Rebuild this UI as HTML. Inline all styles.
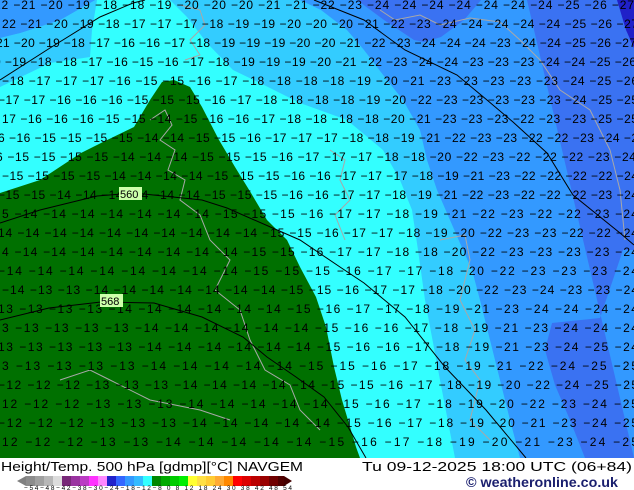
<!DOCTYPE html>
<html><head><meta charset="utf-8"><style>
html,body{margin:0;padding:0;width:634px;height:490px;overflow:hidden;background:#fff}
svg{display:block}
.l{font-family:"Liberation Sans",sans-serif;font-size:12px;fill:#000}
</style></head><body>
<svg width="634" height="490" viewBox="0 0 634 490" xmlns="http://www.w3.org/2000/svg">
<rect x="0" y="0" width="634" height="458" fill="#3399ff"/>
<polygon fill="#3a72f2" points="527,0 634,0 634,250 623,250 600,318 552,323 545,350 555,385 570,420 585,458 634,458"/>
<polygon fill="#3a72f2" points="357,0 481,0 464,20 441,37 424,42 414,40 384,20"/>
<polygon fill="#2020c8" points="617,0 634,0 634,48 626,30"/>
<polygon fill="#33ccff" points="0,37 20,33 60,20 95,0 300,0 321,10 347,30 364,50 387,80 403,100 420,130 427,160 437,190 450,220 463,250 472,270 480,300 495,360 510,420 520,458 0,458"/>
<polygon fill="#3399ff" points="0,0 95,0 60,20 20,33 0,38"/>
<polygon fill="#33ffff" points="97,0 170,0 187,17 207,43 233,70 260,83 300,103 347,120 383,150 400,180 412,210 418,250 425,300 440,380 455,458 0,458 0,87 50,63 90,57 92,30"/>
<polygon fill="#007000" points="0,193 40,180 81,153 101,143 134,127 150,100 162,82 174,80 190,87 202,107 219,140 235,167 251,193 267,220 287,240 300,267 316,297 326,327 334,367 342,400 356,447 360,458 0,458"/>
<g fill="none" stroke="#a8a8a8" stroke-width="1">
<path d="M150,120 L165,110 172,125 160,140 175,150 168,170 185,180 180,200 200,215 210,240 230,260 215,290 240,310 250,340 265,370 290,385 300,410 320,430"/>
<path d="M180,5 L200,10 205,25 190,40 200,55 185,60"/>
<path d="M330,150 L345,160 340,180 350,200 335,215 345,240"/>
<path d="M440,240 L465,235 470,260 460,300 475,330 465,360 480,380 470,420 490,440"/>
<path d="M380,10 L395,20 420,15 440,25 470,18 500,22 520,40 540,60 560,90 590,110 610,150 620,190 625,240"/>
<path d="M60,380 L90,370 110,380 150,400 200,410 230,420"/>
</g>
<g fill="none" stroke="#000" stroke-width="1">
<path d="M0,80 L50,48 100,17 133,3 145,0"/>
<path d="M314,0 L364,20 405,50 457,75 487,100 513,122 547,153 573,195 620,233 634,245"/>
<path d="M0,223 L40,210 97,196 134,193 202,200 227,208 300,240 340,267 364,283 405,317 445,367 486,410 526,458"/>
<path d="M0,320 L49,308 101,302 154,303 202,317 243,337 267,357 296,377 324,397 348,427 366,458"/>
</g>
<g class="l">
<text x="-6" y="9" textLength="640" lengthAdjust="spacing">22 −21 −20 −19 −18 −18 −19 −20 −20 −20 −21 −21 −22 −23 −24 −24 −24 −24 −24 −24 −24 −25 −26 −27</text>
<text x="2" y="28" textLength="636" lengthAdjust="spacing">22 −21 −20 −19 −18 −17 −17 −17 −18 −19 −19 −20 −20 −20 −21 −22 −23 −24 −24 −24 −24 −24 −25 −26 −27</text>
<text x="-4" y="47" textLength="640" lengthAdjust="spacing">21 −20 −19 −18 −17 −16 −16 −17 −18 −19 −19 −19 −20 −20 −21 −22 −23 −24 −24 −24 −23 −24 −24 −25 −26 −27</text>
<text x="-6" y="66" textLength="642" lengthAdjust="spacing">0 −19 −18 −18 −17 −16 −15 −16 −17 −18 −19 −19 −19 −20 −21 −22 −23 −24 −24 −23 −23 −23 −24 −24 −25 −26</text>
<text x="2" y="85" textLength="636" lengthAdjust="spacing">−18 −17 −17 −17 −16 −15 −15 −16 −17 −18 −18 −18 −18 −19 −20 −21 −23 −23 −23 −23 −23 −24 −25 −26</text>
<text x="-2" y="104" textLength="640" lengthAdjust="spacing">−17 −17 −16 −16 −16 −15 −15 −15 −16 −17 −18 −18 −18 −18 −19 −20 −22 −23 −23 −23 −23 −23 −24 −25 −25</text>
<text x="2" y="123" textLength="636" lengthAdjust="spacing">17 −16 −16 −16 −15 −15 −14 −15 −16 −16 −17 −18 −18 −18 −18 −20 −21 −23 −23 −23 −22 −23 −23 −25 −25</text>
<text x="-2" y="142" textLength="640" lengthAdjust="spacing">6 −16 −15 −15 −15 −15 −14 −14 −15 −15 −16 −17 −17 −17 −18 −18 −19 −21 −22 −23 −23 −22 −22 −23 −24 −2</text>
<text x="-4" y="161" textLength="640" lengthAdjust="spacing">6 −15 −15 −15 −15 −14 −14 −14 −15 −15 −15 −16 −17 −17 −17 −18 −18 −20 −22 −23 −22 −22 −22 −23 −24</text>
<text x="2" y="180" textLength="636" lengthAdjust="spacing">−15 −15 −15 −15 −14 −14 −14 −14 −15 −15 −15 −16 −16 −17 −17 −17 −18 −19 −21 −23 −22 −22 −22 −22 −24</text>
<text x="-2" y="199" textLength="640" lengthAdjust="spacing">−15 −15 −14 −14 −14 −14 −14 −14 −15 −15 −15 −16 −16 −17 −17 −18 −19 −21 −22 −23 −22 −22 −22 −23 −24</text>
<text x="2" y="218" textLength="636" lengthAdjust="spacing">5 −14 −14 −14 −14 −14 −14 −14 −15 −15 −15 −16 −17 −17 −18 −19 −21 −22 −23 −22 −22 −23 −24</text>
<text x="-2" y="237" textLength="640" lengthAdjust="spacing">14 −14 −14 −14 −14 −14 −14 −14 −14 −14 −15 −15 −16 −17 −17 −18 −19 −20 −22 −23 −23 −22 −22 −24</text>
<text x="2" y="256" textLength="636" lengthAdjust="spacing">4 −14 −14 −14 −14 −14 −14 −14 −14 −15 −15 −16 −17 −17 −18 −18 −20 −22 −23 −23 −23 −23 −24</text>
<text x="-2" y="275" textLength="640" lengthAdjust="spacing">−14 −14 −14 −14 −14 −14 −14 −14 −15 −15 −15 −16 −17 −17 −18 −20 −22 −23 −23 −23 −24</text>
<text x="2" y="294" textLength="636" lengthAdjust="spacing">−14 −13 −13 −14 −14 −14 −14 −14 −14 −14 −15 −15 −16 −17 −17 −18 −20 −22 −23 −24 −23 −23 −24</text>
<text x="-2" y="313" textLength="640" lengthAdjust="spacing">13 −13 −13 −13 −14 −14 −14 −14 −14 −14 −15 −16 −17 −17 −18 −19 −21 −23 −24 −24 −24 −24</text>
<text x="2" y="332" textLength="636" lengthAdjust="spacing">3 −13 −13 −13 −13 −14 −14 −14 −14 −14 −14 −15 −16 −16 −17 −18 −19 −21 −23 −24 −24 −24</text>
<text x="-2" y="351" textLength="640" lengthAdjust="spacing">13 −13 −13 −13 −13 −14 −14 −14 −14 −14 −14 −15 −16 −16 −17 −18 −19 −21 −23 −24 −25 −24</text>
<text x="2" y="370" textLength="636" lengthAdjust="spacing">3 −13 −13 −13 −13 −14 −14 −14 −14 −14 −15 −15 −16 −17 −18 −19 −21 −22 −24 −25 −25</text>
<text x="-2" y="389" textLength="640" lengthAdjust="spacing">−12 −12 −12 −13 −13 −13 −14 −14 −14 −14 −14 −15 −15 −16 −17 −18 −19 −20 −22 −24 −25 −25</text>
<text x="2" y="408" textLength="636" lengthAdjust="spacing">12 −12 −12 −13 −13 −13 −14 −14 −14 −14 −14 −15 −16 −17 −18 −19 −20 −22 −23 −24 −25</text>
<text x="-2" y="427" textLength="640" lengthAdjust="spacing">−12 −12 −12 −13 −13 −13 −14 −14 −14 −14 −14 −15 −16 −17 −18 −19 −20 −21 −23 −24 −25</text>
<text x="2" y="446" textLength="636" lengthAdjust="spacing">12 −12 −12 −13 −13 −14 −14 −14 −14 −14 −15 −16 −17 −18 −19 −20 −21 −23 −24 −25</text>
</g>
<rect x="119" y="187" width="23" height="13" fill="#ccffaa"/>
<text x="120" y="198" font-family="Liberation Sans" font-size="11" fill="#000">560</text>
<rect x="100" y="294" width="23" height="13" fill="#ccffaa"/>
<text x="101" y="305" font-family="Liberation Sans" font-size="11" fill="#000">568</text>
<rect x="0" y="458" width="634" height="32" fill="#fff"/>
<text x="1" y="471" font-family="Liberation Sans" font-size="12.5" fill="#000" textLength="302" lengthAdjust="spacingAndGlyphs">Height/Temp. 500 hPa [gdmp][°C] NAVGEM</text>
<text x="362" y="471" font-family="Liberation Sans" font-size="12.5" fill="#000" textLength="270" lengthAdjust="spacingAndGlyphs">Tu 09-12-2025 18:00 UTC (06+84)</text>
<text x="466" y="487" font-family="Liberation Sans" font-size="13.5" font-weight="bold" fill="#1a1f6e" textLength="152" lengthAdjust="spacingAndGlyphs">© weatheronline.co.uk</text>
<g>
<polygon points="17,481 26,476 26,486" fill="#808080"/>
<rect x="26" y="476" width="9" height="10" fill="#8c8c8c"/>
<rect x="35" y="476" width="9" height="10" fill="#a0a0a0"/>
<rect x="44" y="476" width="9" height="10" fill="#b8b8b8"/>
<rect x="53" y="476" width="9" height="10" fill="#dcdcdc"/>
<rect x="62" y="476" width="9" height="10" fill="#782878"/>
<rect x="71" y="476" width="9" height="10" fill="#9a33a0"/>
<rect x="80" y="476" width="9" height="10" fill="#bb3cc4"/>
<rect x="89" y="476" width="9" height="10" fill="#ff33ff"/>
<rect x="98" y="476" width="9" height="10" fill="#ff88ff"/>
<rect x="107" y="476" width="9" height="10" fill="#2222cc"/>
<rect x="116" y="476" width="9" height="10" fill="#3366ff"/>
<rect x="125" y="476" width="9" height="10" fill="#3399ff"/>
<rect x="134" y="476" width="9" height="10" fill="#33bbff"/>
<rect x="143" y="476" width="9" height="10" fill="#33ffff"/>
<rect x="152" y="476" width="9" height="10" fill="#008800"/>
<rect x="161" y="476" width="9" height="10" fill="#00aa00"/>
<rect x="170" y="476" width="9" height="10" fill="#00cc00"/>
<rect x="179" y="476" width="9" height="10" fill="#00ee00"/>
<rect x="188" y="476" width="9" height="10" fill="#ffff33"/>
<rect x="197" y="476" width="9" height="10" fill="#ffe044"/>
<rect x="206" y="476" width="9" height="10" fill="#ffcc33"/>
<rect x="215" y="476" width="9" height="10" fill="#ffaa33"/>
<rect x="224" y="476" width="9" height="10" fill="#ff8800"/>
<rect x="233" y="476" width="9" height="10" fill="#ff0000"/>
<rect x="242" y="476" width="9" height="10" fill="#dd0000"/>
<rect x="251" y="476" width="9" height="10" fill="#bb0000"/>
<rect x="260" y="476" width="9" height="10" fill="#990000"/>
<rect x="269" y="476" width="9" height="10" fill="#700000"/>
<rect x="278" y="476" width="6" height="10" fill="#500000"/>
<polygon points="284,476 292,481 284,486" fill="#440000"/>
</g>
<text x="24" y="490" font-family="Liberation Sans" font-size="6.5" fill="#000" textLength="268" lengthAdjust="spacing">−54−48−42−38−30−24−18−12−8  0  8  12  18  24  30  38  42  48  54</text>
</svg>
</body></html>
